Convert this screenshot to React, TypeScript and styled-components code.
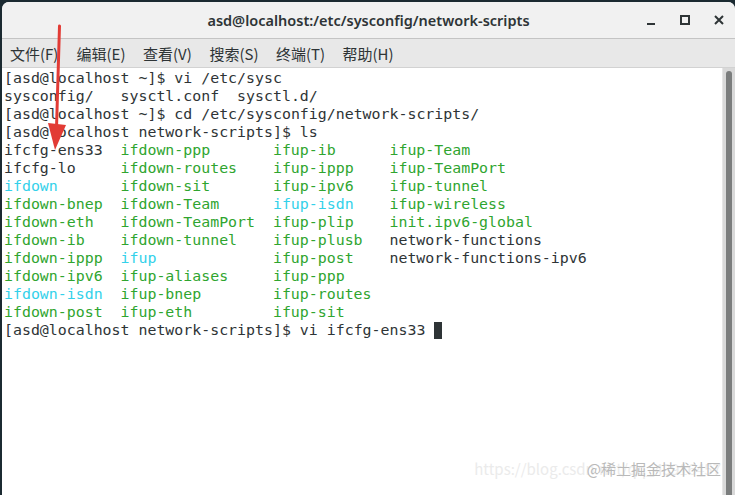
import styled, { createGlobalStyle } from "styled-components";

const GlobalStyle = createGlobalStyle`
  html, body {
    margin: 0;
    padding: 0;
    background: #1b2a31;
    overflow: hidden;
  }
  #root {
    width: 735px;
    height: 495px;
  }
`;

const Desktop = styled.div`
  width: 735px;
  height: 495px;
  padding: 2px 0 0 2px;
  box-sizing: border-box;
`;

const Window = styled.div`
  position: relative;
  width: 733px;
  height: 493px;
  display: flex;
  flex-direction: column;
  background: #ffffff;
  border-radius: 7px 7px 0 0;
  overflow: hidden;
`;

const TitleBar = styled.div`
  height: 36px;
  flex: none;
  display: flex;
  align-items: center;
  justify-content: center;
  position: relative;
  background: #f1f1f1;
  border-bottom: 1px solid #c4c4c4;
  font-family: "Noto Sans", "DejaVu Sans", sans-serif;
  font-size: 14.5px;
  font-weight: 600;
  color: #2e3436;
`;

const Controls = styled.div`
  position: absolute;
  right: 8px;
  top: 0;
  height: 36px;
  display: flex;
  align-items: center;
  gap: 18px;
`;

const ControlBtn = styled.div`
  width: 16px;
  height: 16px;
  display: flex;
  align-items: center;
  justify-content: center;
`;

const MenuBar = styled.div`
  height: 28px;
  flex: none;
  display: flex;
  align-items: center;
  padding-left: 8px;
  gap: 18px;
  background: #e8e8e8;
  border-bottom: 1px solid #d2d2d2;
  font-family: "Noto Sans CJK SC", "Noto Sans", sans-serif;
  font-size: 15px;
  color: #2e3436;
`;

const MenuItem = styled.span`
  width: 48.5px;
  white-space: nowrap;
`;

const TermArea = styled.div`
  flex: 1;
  display: flex;
  min-height: 0;
`;

const Screen = styled.div`
  flex: 1;
  padding: 1px 0 0 2px;
  font-family: "DejaVu Sans Mono", monospace;
  font-size: 14.9px;
  line-height: 18px;
  color: #2e3436;
  white-space: pre;
`;

const Line = styled.div`
  height: 18px;
`;

const LsGrid = styled.div`
  display: grid;
  grid-template-columns: 13ch 17ch 13ch auto;
  grid-auto-rows: 18px;
`;

const Entry = styled.span<{ kind?: "exec" | "link" | "plain" }>`
  color: ${({ kind }) =>
    kind === "exec" ? "#2fa52f" : kind === "link" ? "#33d1ea" : "#2e3436"};
`;

const Cursor = styled.span`
  display: inline-block;
  width: 8px;
  height: 17px;
  margin-left: 9px;
  vertical-align: -4px;
  background: #2e3436;
`;

const Scrollbar = styled.div`
  width: 13px;
  flex: none;
  background: #d9d9d9;
  border-left: 1px solid #e6e6e6;
  display: flex;
  justify-content: center;
  padding-top: 3px;
  box-sizing: border-box;
`;

const Thumb = styled.div`
  width: 6px;
  height: 100%;
  border-radius: 3px 3px 0 0;
  background: #7b7d7d;
`;

const Watermark = styled.div`
  position: absolute;
  right: 14px;
  bottom: 16px;
  display: grid;
  justify-items: end;
  align-items: center;
  font-family: "Noto Sans CJK SC", "Liberation Sans", sans-serif;
  font-size: 15px;
  white-space: nowrap;
  pointer-events: none;
`;

const WatermarkUrl = styled.span`
  grid-area: 1 / 1;
  color: #ebebeb;
`;

const WatermarkTag = styled.span`
  grid-area: 1 / 1;
  color: #b9b9b9;
`;

const Arrow = styled.svg`
  position: absolute;
  left: 0;
  top: 0;
  pointer-events: none;
`;

type Kind = "exec" | "link" | "plain";
const E: Kind = "exec";
const L: Kind = "link";
const P: Kind = "plain";

const lsRows: [string, Kind][][] = [
  [["ifcfg-ens33", P], ["ifdown-ppp", E], ["ifup-ib", E], ["ifup-Team", E]],
  [["ifcfg-lo", P], ["ifdown-routes", E], ["ifup-ippp", E], ["ifup-TeamPort", E]],
  [["ifdown", L], ["ifdown-sit", E], ["ifup-ipv6", E], ["ifup-tunnel", E]],
  [["ifdown-bnep", E], ["ifdown-Team", E], ["ifup-isdn", L], ["ifup-wireless", E]],
  [["ifdown-eth", E], ["ifdown-TeamPort", E], ["ifup-plip", E], ["init.ipv6-global", E]],
  [["ifdown-ib", E], ["ifdown-tunnel", E], ["ifup-plusb", E], ["network-functions", P]],
  [["ifdown-ippp", E], ["ifup", L], ["ifup-post", E], ["network-functions-ipv6", P]],
  [["ifdown-ipv6", E], ["ifup-aliases", E], ["ifup-ppp", E], ["", P]],
  [["ifdown-isdn", L], ["ifup-bnep", E], ["ifup-routes", E], ["", P]],
  [["ifdown-post", E], ["ifup-eth", E], ["ifup-sit", E], ["", P]],
];

const menus = ["文件(F)", "编辑(E)", "查看(V)", "搜索(S)", "终端(T)", "帮助(H)"];

export default function App() {
  return (
    <>
      <GlobalStyle />
      <Desktop>
        <Window>
          <TitleBar>
            asd@localhost:/etc/sysconfig/network-scripts
            <Controls>
              <ControlBtn>
                <svg width="12" height="12" viewBox="0 0 12 12">
                  <rect x="2" y="9" width="8" height="2" fill="#2e3436" />
                </svg>
              </ControlBtn>
              <ControlBtn>
                <svg width="12" height="12" viewBox="0 0 12 12">
                  <rect x="2" y="2" width="8" height="8" fill="none" stroke="#2e3436" strokeWidth="2" />
                </svg>
              </ControlBtn>
              <ControlBtn>
                <svg width="12" height="12" viewBox="0 0 12 12">
                  <path d="M2 2 L10 10 M10 2 L2 10" stroke="#2e3436" strokeWidth="2" />
                </svg>
              </ControlBtn>
            </Controls>
          </TitleBar>
          <MenuBar>
            {menus.map((m) => (
              <MenuItem key={m}>{m}</MenuItem>
            ))}
          </MenuBar>
          <TermArea>
            <Screen>
              <Line>[asd@localhost ~]$ vi /etc/sysc</Line>
              <Line>sysconfig/   sysctl.conf  sysctl.d/</Line>
              <Line>[asd@localhost ~]$ cd /etc/sysconfig/network-scripts/</Line>
              <Line>[asd@localhost network-scripts]$ ls</Line>
              <LsGrid>
                {lsRows.flatMap((row, i) =>
                  row.map(([name, kind], j) => (
                    <Entry key={`${i}-${j}`} kind={kind}>
                      {name}
                    </Entry>
                  ))
                )}
              </LsGrid>
              <Line>
                [asd@localhost network-scripts]$ vi ifcfg-ens33
                <Cursor />
              </Line>
            </Screen>
            <Scrollbar>
              <Thumb />
            </Scrollbar>
          </TermArea>
          <Watermark>
            <WatermarkUrl>https://blog.csdn.net/qq_43916457</WatermarkUrl>
            <WatermarkTag>@稀土掘金技术社区</WatermarkTag>
          </Watermark>
          <Arrow width="733" height="493" viewBox="0 0 733 493">
            <path d="M57.5 24 L54.5 126" stroke="#e23b35" strokeWidth="3" strokeLinecap="round" />
            <polygon points="46,121 64,123 53,148" fill="#e23b35" />
          </Arrow>
        </Window>
      </Desktop>
    </>
  );
}
